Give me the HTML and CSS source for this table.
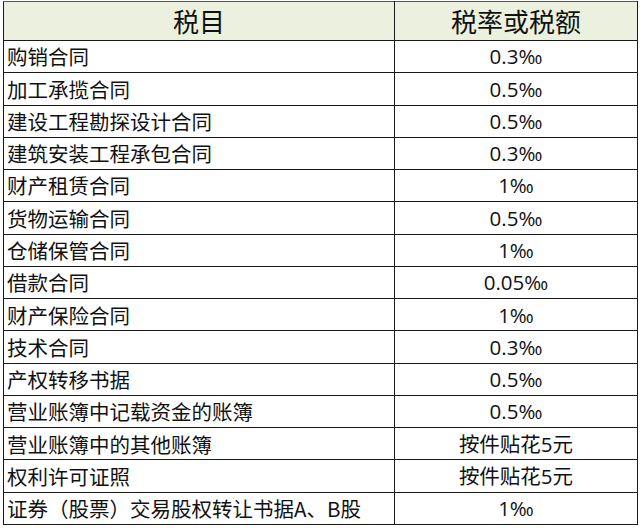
FILE: index.html
```html
<!DOCTYPE html>
<html lang="zh-CN">
<head>
<meta charset="utf-8">
<title>税目税率表</title>
<link rel="stylesheet" href="styles.css">
</head>
<body>
<table class="tax">
  <colgroup><col class="c-item"><col class="c-rate"></colgroup>
  <thead>
    <tr><th>税目</th><th>税率或税额</th></tr>
  </thead>
  <tbody>
    <tr><td>购销合同</td><td>0.3‰</td></tr>
    <tr><td>加工承揽合同</td><td>0.5‰</td></tr>
    <tr><td>建设工程勘探设计合同</td><td>0.5‰</td></tr>
    <tr><td>建筑安装工程承包合同</td><td>0.3‰</td></tr>
    <tr><td>财产租赁合同</td><td>1‰</td></tr>
    <tr><td>货物运输合同</td><td>0.5‰</td></tr>
    <tr><td>仓储保管合同</td><td>1‰</td></tr>
    <tr><td>借款合同</td><td>0.05‰</td></tr>
    <tr><td>财产保险合同</td><td>1‰</td></tr>
    <tr><td>技术合同</td><td>0.3‰</td></tr>
    <tr><td>产权转移书据</td><td>0.5‰</td></tr>
    <tr><td>营业账簿中记载资金的账簿</td><td>0.5‰</td></tr>
    <tr><td>营业账簿中的其他账簿</td><td>按件贴花5元</td></tr>
    <tr><td>权利许可证照</td><td>按件贴花5元</td></tr>
    <tr><td>证券（股票）交易股权转让书据A、B股</td><td>1‰</td></tr>
  </tbody>
</table>
</body>
</html>
```
FILE: styles.css
```css
html, body {
  margin: 0;
  padding: 0;
  background: #ffffff;
}
body {
  padding: 1px 0 0 3px;
  font-family: "Noto Sans CJK SC", "Noto Sans", sans-serif;
  color: #111111;
}
.tax {
  border-collapse: collapse;
  table-layout: fixed;
  width: 634px;
}
.c-item { width: 391px; }
.c-rate { width: 243px; }
.tax th, .tax td {
  border: 1px solid #1a1a1a;
  padding: 0;
  white-space: nowrap;
  overflow: hidden;
  line-height: 1;
}
.tax th {
  background: #ebf1de;
  font-weight: 400;
  font-size: 26px;
  height: 38px;
  text-align: center;
  border-top-color: #555555;
}
.tax td {
  font-size: 20.5px;
  height: 31.27px;
}
.tax td:first-child {
  text-align: left;
  padding-left: 3px;
}
.tax td:last-child {
  text-align: center;
  font-family: "Open Sans", "Noto Sans CJK SC", sans-serif;
}
```
